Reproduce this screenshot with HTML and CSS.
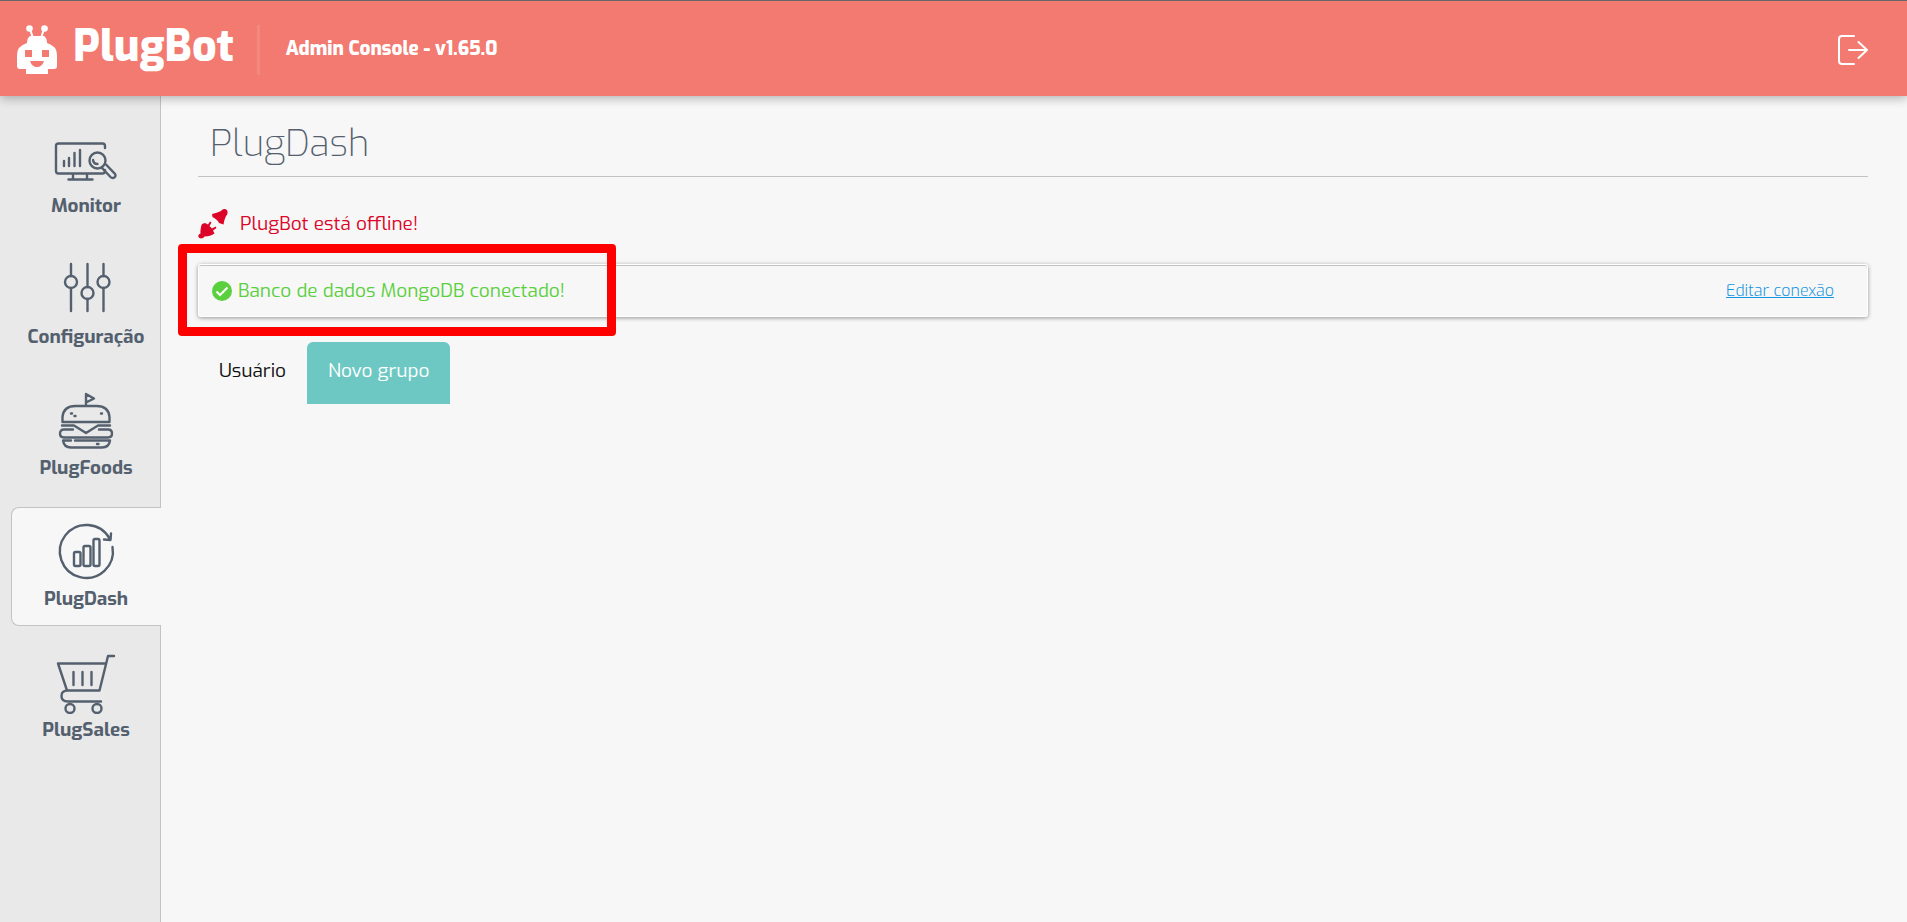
FILE: index.html
```
<!DOCTYPE html>
<html lang="pt-BR">
<head>
  <meta charset="UTF-8" />
  <meta name="viewport" content="width=device-width, initial-scale=1.0"/>
  <title>PlugBot</title>
  <link rel="stylesheet" href="styles.css">
</head>
<body>

  <header class="topbar">
    <a class="brand" href="#">
      <svg class="brand-icon" viewBox="0 0 40 49" aria-hidden="true">
        <path d="M13 4l3 9M27 4l-3 9" fill="none" stroke="#fff" stroke-width="2"/>
        <circle cx="12.500" cy="3.500" r="3.300" fill="#fff"/>
        <circle cx="27.500" cy="3.500" r="3.300" fill="#fff"/>
        <path fill="#fff" fill-rule="evenodd" d="M13 11h14q3 2 3 7q10 3 10 12v11q0 3-3 3h-6v5H9v-5H3q-3 0-3-3V30q0-9 10-12q0-5 3-7zM8 25v7h7v-7zM25 25v7h7v-7zM13 36q2 6 7 6t7-6z"/>
      </svg>
      <span class="brand-name">PlugBot</span>
    </a>
    <span class="version">Admin Console - v1.65.0</span>
    <button class="logout" type="button" aria-label="Sair">
      <svg viewBox="0 0 30 30" aria-hidden="true">
        <path d="M16 1H4Q1 1 1 4v22q0 3 3 3h12M11 15h18M20.500 7l8.500 8l-8.500 8"/>
      </svg>
    </button>
  </header>

  <div class="layout">
    <!-- MENU -->
    <nav class="sidebar">
      <a class="menu-item" href="#">
        <svg viewBox="0 0 64 64" aria-hidden="true">
          <path d="M51 22V20q0-2.500-2.500-2.500h-44Q2 17.500 2 20v25q0 2.500 2.500 2.500h44Q51 47.500 51 45v-1M19 48v5M33 48v5M14.500 53.500h24M10 35v5M15 32v8M20.500 27v13M26 24v16"/>
          <circle cx="43.500" cy="34.500" r="8"/>
          <path d="M39 34q.5 4 4.500 4M48 42l8.500 9q2 2 4 .3t0-4L52 38.500"/>
        </svg>
        <span>Monitor</span>
      </a>
      <a class="menu-item" href="#">
        <svg viewBox="0 0 64 64" aria-hidden="true">
          <path d="M17 7v12M17 31v23M33.500 7v23M33.500 42v12M49.500 7v12M49.500 31v23"/>
          <circle cx="17" cy="25" r="6"/>
          <circle cx="33.500" cy="36" r="6"/>
          <circle cx="49.500" cy="25" r="6"/>
        </svg>
        <span>Configuração</span>
      </a>
      <a class="menu-item" href="#">
        <svg viewBox="0 0 64 64" aria-hidden="true">
          <path d="M32 18V6l8 4.500l-8 4M8.500 34V29q1-11 13-11h21q12 0 13 11v5zM8 37.500h12l12 7.500l12-7.500h12"/>
          <path d="M19 41.500H10q-4 0-4 4t4 4h44q4 0 4-4t-4-4h-9M9 52.500h8M21 52.500h35q-1 7-8 7H17q-7 0-8-7M43 56h1.500M17 25.500h1M20.500 28h1M47 25.500h1"/>
        </svg>
        <span>PlugFoods</span>
      </a>
      <a class="menu-item active" href="#">
        <svg viewBox="0 0 64 64" aria-hidden="true">
          <path d="M58.500 28A26.500 26.500 0 1 1 55.500 19.500M50 20.500l6.500.5l.5-6.500"/>
          <rect x="20" y="33" width="6.500" height="14" rx="1.500"/>
          <rect x="29.500" y="27" width="7" height="20" rx="1.500"/>
          <rect x="39.500" y="20" width="6" height="27" rx="1.500"/>
        </svg>
        <span>PlugDash</span>
      </a>
      <a class="menu-item" href="#">
        <svg viewBox="0 0 64 64" aria-hidden="true">
          <path d="M60 6h-6l-8.500 34.500H13L4 13.500h48M19.500 22v13M28.500 22v13M37.500 22v13M14 40.500q-6.500 0-6.500 5.500t6.500 5.500h33"/>
          <circle cx="16" cy="58.500" r="4.500"/>
          <circle cx="43" cy="58.500" r="4.500"/>
        </svg>
        <span>PlugSales</span>
      </a>
    </nav>

    <!-- PLUGDASH -->
    <main class="content">
      <h1>PlugDash</h1>

      <p class="bot-status">
        <svg viewBox="0 0 30 30" aria-hidden="true">
          <path d="M14 5q5-1 9-3q1-2 3.500-2Q30 .5 29.500 4q0 2-1.500 3q-2 4-2.500 8.500L21 14q-1-3-6.500-6zM4 15l3-1l3 1.500l2-3l1.500 1l-2 3.500l2.500 2.500l3.500-2l1 1.500l-3.500 2.500l1.500 3q-4 3-10 3q-1 2-3.500 2Q-.5 29 .5 26q.5-1 2-1.500Q2 19 4 15z"/>
        </svg>
        <span>PlugBot está offline!</span>
      </p>

      <section class="panel">
        <p class="db-status">
          <svg viewBox="0 0 20 20" aria-hidden="true">
            <circle cx="10" cy="10" r="10" fill="#5bd03e"/>
            <path d="M4.500 10.500l3.500 3.500l7.500-7.500" fill="none" stroke="#fff" stroke-width="2"/>
          </svg>
          <span>Banco de dados MongoDB conectado!</span>
        </p>
        <a class="edit-link" href="#">Editar conexão</a>
        <div class="highlight"></div>
      </section>

      <div class="tabs">
        <button class="tab-button" type="button">Usuário</button>
        <button class="tab-button active" type="button">Novo grupo</button>
      </div>
    </main>
  </div>

</body>
</html>
```

FILE: styles.css
```
:root {
  --primary: #f27a70;
  --teal: #6dc8c3;
  --ink: #54606e;
  --line: #c3c3c3;
  --bg: #f7f7f7;
  --bg-menu: #e9e9e9;
}

* {
  box-sizing: border-box;
}

body {
  display: flex;
  flex-direction: column;
  min-height: 100vh;
  margin: 0;
  background: var(--bg);
  color: var(--ink);
  font-family: Exo, 'Exo 2', Roboto, sans-serif;
  font-size: 19px;
  font-weight: 400;
  line-height: 24px;
}

button {
  border: none;
  background: none;
  color: inherit;
  font: inherit;
  cursor: pointer;
}

.topbar {
  position: relative;
  z-index: 1;
  display: flex;
  align-items: center;
  height: 96px;
  padding: 3px 39px 0 17px;
  border-top: 1px solid #666;
  background: var(--primary);
  box-shadow: 0 2px 10px rgba(0, 0, 0, 0.3);
  color: #fff;
}

.brand {
  display: flex;
  gap: 16px;
  height: 50px;
  padding-right: 23px;
  border-right: 3px solid #f4887f;
  color: #fff;
  text-decoration: none;
}

.brand-icon {
  width: 40px;
  height: 49px;
}

.brand-name {
  font-size: 43px;
  font-weight: 800;
  line-height: 44px;
}

.version {
  padding: 0 0 3px 26px;
  font-weight: 800;
}

.logout {
  width: 30px;
  height: 30px;
  margin-left: auto;
  padding: 0;
}

.logout svg {
  display: block;
  fill: none;
  stroke: #fff;
  stroke-width: 2;
  stroke-linecap: round;
  stroke-linejoin: round;
}

.layout {
  display: flex;
  flex: 1;
}

.sidebar {
  display: flex;
  flex-direction: column;
  gap: 12px;
  width: 161px;
  padding: 18px 0 18px 11px;
  border-right: 1px solid var(--line);
  background: var(--bg-menu);
}

.menu-item {
  display: flex;
  flex-direction: column;
  align-items: center;
  height: 119px;
  padding: 11px 0;
  border: 1px solid transparent;
  border-right: none;
  border-radius: 8px 0 0 8px;
  color: var(--ink);
  font-weight: 700;
  text-decoration: none;
}

.menu-item.active {
  margin-right: -1px;
  padding-right: 1px;
  border-color: var(--line);
  background: var(--bg);
}

.menu-item svg {
  width: 64px;
  height: 64px;
  margin-bottom: 4px;
  fill: none;
  stroke: var(--ink);
  stroke-width: 2.4;
  stroke-linecap: round;
  stroke-linejoin: round;
}

.content {
  flex: 1;
  padding: 20px 39px 20px 37px;
}

h1 {
  margin: 0 0 32px;
  padding: 4px 12px 8px;
  border-bottom: 1px solid var(--line);
  font-size: 37px;
  font-weight: 200;
  line-height: 48px;
}

.bot-status {
  display: flex;
  align-items: center;
  gap: 12px;
  margin: 0 0 25px;
  color: #dc0427;
}

.bot-status svg {
  width: 30px;
  height: 30px;
  fill: #dc0427;
}

.panel {
  position: relative;
  display: flex;
  align-items: center;
  justify-content: space-between;
  height: 53px;
  margin-bottom: 25px;
  padding: 0 33px 0 13px;
  border: 1px solid #fff;
  border-radius: 3px;
  box-shadow: 0 1px 4px rgba(0, 0, 0, 0.4), inset 0 1px 0 var(--line);
}

.db-status {
  display: flex;
  align-items: center;
  gap: 6px;
  margin: 0;
  color: #5bd03e;
}

.db-status svg {
  width: 20px;
  height: 20px;
}

.edit-link {
  color: #1495e0;
  font-size: 16px;
  font-weight: 300;
}

/* red frame around the connection status */
.highlight {
  position: absolute;
  top: -21px;
  left: -21px;
  width: 438px;
  height: 92px;
  border: 9px solid #f00;
  border-radius: 4px;
  pointer-events: none;
}

.tabs {
  display: flex;
}

.tab-button {
  height: 62px;
  padding: 0 21px 4px;
  border-radius: 6px 6px 0 0;
  color: #111;
}

.tab-button.active {
  background: var(--teal);
  color: #fff;
}
```
